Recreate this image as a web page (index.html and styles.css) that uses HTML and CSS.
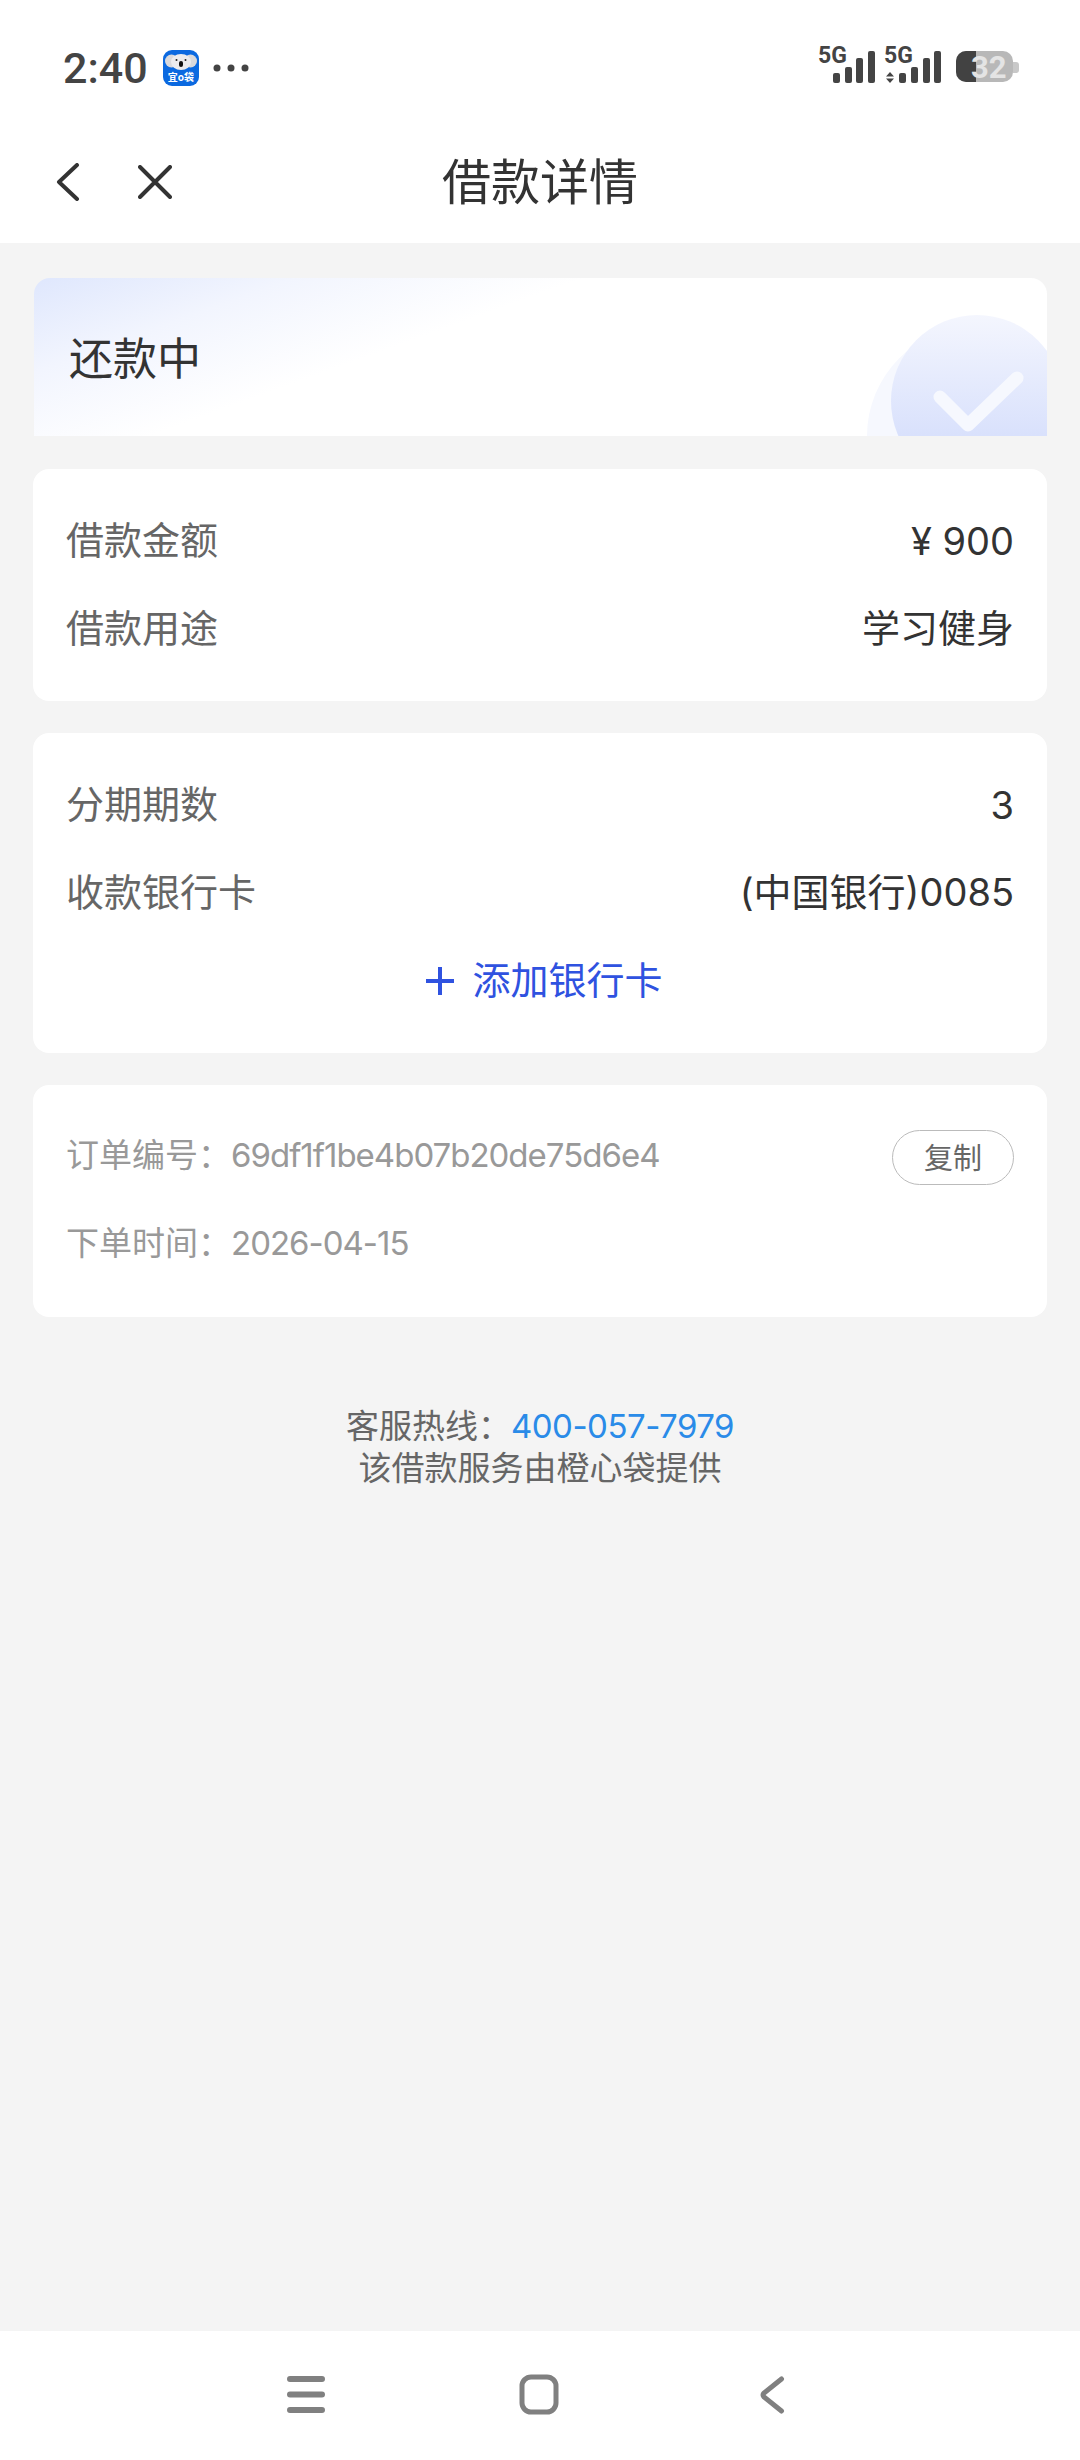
FILE: index.html

```html
<!DOCTYPE html>
<html lang="zh-CN">
<head>
  <meta charset="UTF-8">
  <meta name="viewport" content="width=device-width, initial-scale=1.0">
  <title>借款详情</title>
  <link rel="stylesheet" href="styles.css">
</head>
<body>
  <div class="status-bar">
    <span class="time">2:40</span>
    <svg class="app-icon" viewBox="0 0 36 36">
      <rect width="36" height="36" rx="9" fill="#0b69e0"/>
      <ellipse cx="8.500" cy="11" rx="6.500" ry="6.500" fill="#d9d9dc"/>
      <ellipse cx="27.500" cy="11" rx="6.500" ry="6.500" fill="#d9d9dc"/>
      <ellipse cx="18" cy="12" rx="10" ry="8" fill="#ececee"/>
      <circle cx="13.500" cy="10" r="1" fill="#222"/>
      <circle cx="22.500" cy="10" r="1" fill="#222"/>
      <rect x="16" y="11" width="4" height="6" rx="2" fill="#111"/>
      <text x="18" y="31" class="app-icon-text" text-anchor="middle">宜o袋</text>
    </svg>
    <svg class="more-dots" viewBox="0 0 36 8">
      <circle cx="4" cy="4" r="3.500"/>
      <circle cx="18" cy="4" r="3.500"/>
      <circle cx="32" cy="4" r="3.500"/>
    </svg>
    <svg class="status-icons" viewBox="0 -8 204 48">
      <text x="0" y="15" class="net-text">5G</text>
      <rect x="15" y="25" width="7" height="10" rx="2"/>
      <rect x="27" y="19" width="7" height="16" rx="2"/>
      <rect x="38" y="10" width="7" height="25" rx="2"/>
      <rect x="50" y="3" width="7" height="32" rx="2"/>
      <text x="66" y="15" class="net-text">5G</text>
      <path d="M68 28.500l4-4.500 4 4.500zM68 30.500l4 4.500 4-4.500z"/>
      <rect x="81" y="25" width="7" height="10" rx="2"/>
      <rect x="93" y="19" width="7" height="16" rx="2"/>
      <rect x="105" y="10" width="7" height="25" rx="2"/>
      <rect x="116" y="3" width="7" height="32" rx="2"/>
      <rect x="138" y="3" width="57" height="31" rx="10" fill="#b8b8b8"/>
      <path d="M195 14h3a3 3 0 0 1 3 3v5a3 3 0 0 1-3 3h-3z" fill="#c8c8c8"/>
      <path d="M148 3h10v31h-10a10 10 0 0 1-10-10v-11a10 10 0 0 1 10-10z" fill="#424242"/>
      <text x="153" y="30" class="battery-text">32</text>
    </svg>
  </div>

  <div class="nav-bar">
    <div class="nav-icons">
      <svg class="nav-back" viewBox="0 0 24 38">
        <path d="M21 2 3 19l18 17"/>
      </svg>
      <svg class="nav-close" viewBox="0 0 34 34">
        <path d="M2 2l30 30M32 2 2 32"/>
      </svg>
    </div>
    <div class="nav-title">借款详情</div>
    <div></div>
  </div>

  <main class="content">
    <div class="banner">
      <span class="banner-text">还款中</span>
      <svg class="banner-badge" viewBox="0 0 180 121">
        <defs>
          <linearGradient id="badgeFill" x1="0" y1="0" x2="0" y2="1">
            <stop offset="0" stop-color="#f4f6fe"/>
            <stop offset="0.700" stop-color="#d9e1fc"/>
          </linearGradient>
        </defs>
        <circle cx="110" cy="121" r="110" fill="#f6f8fe"/>
        <circle cx="110" cy="86" r="86" fill="url(#badgeFill)"/>
        <path d="M73 82l28 28 49-47" fill="none" stroke="#f6f8fe" stroke-width="13" stroke-linecap="round" stroke-linejoin="round"/>
      </svg>
    </div>

    <div class="card">
      <div class="row">
        <span class="row-label">借款金额</span>
        <span class="row-value row-num">¥ 900</span>
      </div>
      <div class="row">
        <span class="row-label">借款用途</span>
        <span class="row-value">学习健身</span>
      </div>
    </div>

    <div class="card">
      <div class="row">
        <span class="row-label">分期期数</span>
        <span class="row-value row-num">3</span>
      </div>
      <div class="row">
        <span class="row-label">收款银行卡</span>
        <span class="row-value">(中国银行)0085</span>
      </div>
      <div class="row row-add">
        <svg class="plus-icon" viewBox="0 0 30 30">
          <path d="M15 1v28M1 15h28"/>
        </svg>
        <span>添加银行卡</span>
      </div>
    </div>

    <div class="card">
      <div class="row row-small">
        <span>订单编号：<span class="order-value">69df1f1be4b07b20de75d6e4</span></span>
        <button class="copy-btn">复制</button>
      </div>
      <div class="row row-small">
        <span>下单时间：<span class="order-value">2026-04-15</span></span>
      </div>
    </div>

    <div class="footer-note">
      <div>客服热线：<span class="hotline">400-057-7979</span></div>
      <div>该借款服务由橙心袋提供</div>
    </div>
  </main>

  <div class="bottom-nav">
    <div class="bottom-cell">
      <svg class="bottom-menu" viewBox="0 0 38 37">
        <path d="M3 3h32M3 18.500h32M3 34h32"/>
      </svg>
    </div>
    <div class="bottom-cell">
      <svg class="bottom-home" viewBox="0 0 40 41">
        <rect x="3" y="3" width="34" height="35" rx="9"/>
      </svg>
    </div>
    <div class="bottom-cell">
      <svg class="bottom-back" viewBox="0 0 26 38">
        <path d="M22.500 3 5 17a3 3 0 0 0 0 4l17.500 14"/>
      </svg>
    </div>
  </div>
</body>
</html>
```

FILE: styles.css

```css
* {
  margin: 0;
  padding: 0;
  box-sizing: border-box;
}

body {
  width: 1080px;
  height: 2460px;
  display: flex;
  flex-direction: column;
  font-family: Inter, "Noto Sans CJK SC", sans-serif;
  background: #f4f4f4;
  color: #333;
}

.status-bar {
  height: 120px;
  background: #fff;
  display: flex;
  align-items: flex-start;
  padding: 44px 58px 0 63px;
}

.time {
  font-family: Roboto, sans-serif;
  font-size: 43px;
  line-height: 48px;
  font-weight: 500;
  color: #444;
  width: 100px;
}

.app-icon {
  width: 36px;
  height: 36px;
  margin-top: 6px;
}

.app-icon-text {
  font-size: 10px;
  font-weight: 700;
  fill: #fff;
  font-family: "Noto Sans CJK SC", sans-serif;
}

.more-dots {
  width: 36px;
  height: 8px;
  margin: 20px 0 0 14px;
  fill: #444;
}

.status-icons {
  width: 204px;
  height: 48px;
  margin: -4px 0 0 auto;
  fill: #444;
}

.net-text {
  font-family: Roboto, sans-serif;
  font-size: 23px;
  font-weight: 700;
}

.battery-text {
  font-family: Roboto, sans-serif;
  font-size: 31px;
  font-weight: 700;
  fill: #e4e4e4;
}

.nav-bar {
  height: 123px;
  background: #fff;
  display: grid;
  grid-template-columns: 1fr auto 1fr;
  align-items: center;
  padding: 0 56px;
}

.nav-icons {
  display: flex;
  align-items: center;
  gap: 58px;
}

.nav-back {
  width: 24px;
  height: 38px;
  fill: none;
  stroke: #333;
  stroke-width: 4;
  stroke-linecap: round;
  stroke-linejoin: round;
}

.nav-close {
  width: 34px;
  height: 34px;
  fill: none;
  stroke: #333;
  stroke-width: 4;
  stroke-linecap: round;
}

.nav-title {
  font-size: 49px;
  line-height: 64px;
  padding-top: 2px;
  color: #333;
}

.content {
  flex: 1;
  padding: 35px 33px 0;
  display: flex;
  flex-direction: column;
}

.banner {
  position: relative;
  height: 158px;
  margin: 0 0 33px 1px;
  border-radius: 16px 16px 0 0;
  overflow: hidden;
  background: linear-gradient(160deg, #dfe7fd 0%, #f2f5fe 18%, #fff 38%);
  display: flex;
  align-items: center;
  padding: 0 0 2px 35px;
}

.banner-text {
  font-size: 44px;
  color: #333;
}

.banner-badge {
  position: absolute;
  right: 0;
  bottom: 0;
  width: 180px;
  height: 121px;
}

.card {
  background: #fff;
  border-radius: 16px;
  padding: 28px 33px;
  margin-bottom: 32px;
}

.row {
  height: 88px;
  display: flex;
  align-items: center;
  justify-content: space-between;
  font-size: 38px;
}

/* CJK sits a little high against the Latin baseline in the original */
.row > span {
  padding-bottom: 8px;
}

.row-label {
  color: #666;
}

.row-value {
  color: #333;
}

.row > .row-num {
  padding-bottom: 1px;
}

.row-add {
  justify-content: center;
  gap: 17px;
  padding-left: 8px;
  color: #2f52e0;
}

.plus-icon {
  width: 30px;
  height: 30px;
  fill: none;
  stroke: #2f52e0;
  stroke-width: 4;
}

.row-small {
  font-size: 33px;
  color: #999;
}

.order-value {
  letter-spacing: -1px;
}

.copy-btn {
  width: 122px;
  height: 55px;
  padding-bottom: 3px;
  background: #fff;
  border: 1px solid #bbb;
  border-radius: 28px;
  font-family: inherit;
  font-size: 29px;
  color: #666;
}

.footer-note {
  margin-top: 56px;
  text-align: center;
  font-size: 33px;
  line-height: 42px;
  color: #666;
}

.hotline {
  color: #2a8be8;
  letter-spacing: -0.500px;
}

.bottom-nav {
  height: 129px;
  background: #fff;
  display: flex;
  justify-content: center;
  padding: 43px 3px 0 0;
}

.bottom-cell {
  width: 233px;
  display: flex;
  justify-content: center;
  align-items: flex-start;
}

.bottom-menu {
  width: 38px;
  height: 37px;
  margin-top: 2px;
  fill: none;
  stroke: #808080;
  stroke-width: 6;
  stroke-linecap: round;
}

.bottom-home {
  width: 40px;
  height: 41px;
  fill: none;
  stroke: #808080;
  stroke-width: 5;
}

.bottom-back {
  width: 26px;
  height: 38px;
  margin-top: 2px;
  fill: none;
  stroke: #808080;
  stroke-width: 5;
  stroke-linecap: round;
}
```
